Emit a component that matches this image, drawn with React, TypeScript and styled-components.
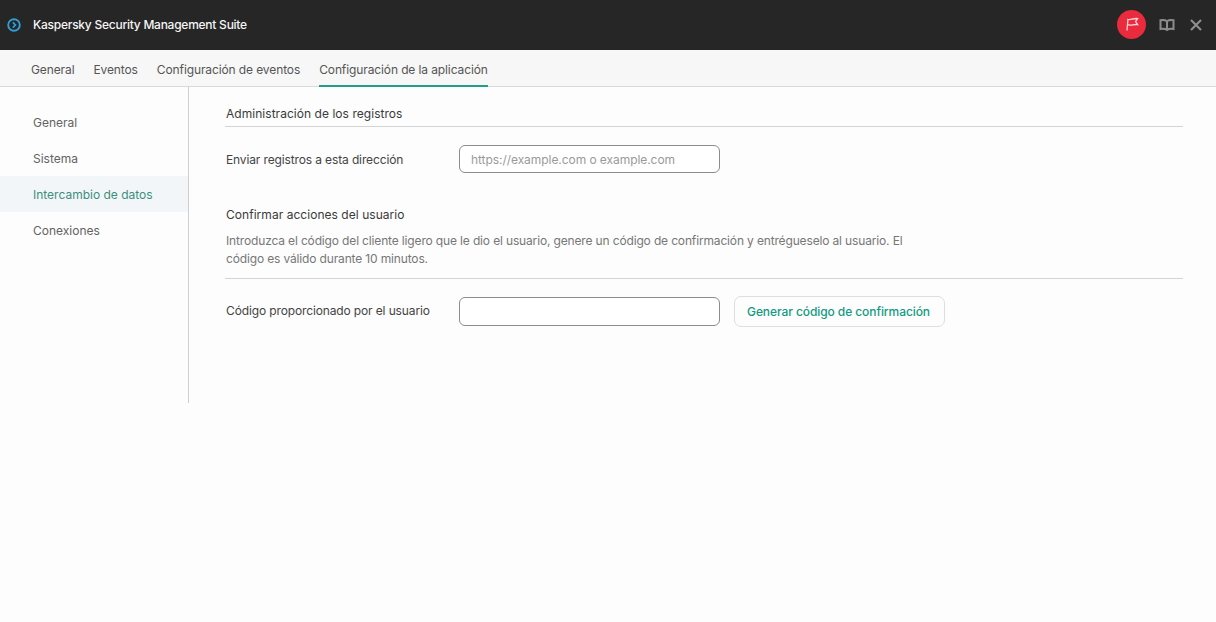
import React from "react";
import styled, { createGlobalStyle } from "styled-components";

const Global = createGlobalStyle`
  html, body { margin: 0; padding: 0; background: #fdfdfd; }
  body { font-family: Inter, "Liberation Sans", sans-serif; font-size: 12px; color: #2c2c2c; }
  * { box-sizing: border-box; }
`;

const Page = styled.div`
  width: 1216px;
  height: 622px;
  overflow: hidden;
  background: #fdfdfd;
`;

const Header = styled.header`
  height: 50px;
  background: #262626;
  display: flex;
  align-items: center;
  padding: 0 12px 1px 7px;
`;

const Title = styled.h1`
  margin: 0 0 1px 12px;
  font-size: 12px;
  font-weight: 500;
  letter-spacing: -0.25px;
  color: #f5f5f5;
  flex: 1;
`;

const Flag = styled.div`
  width: 29px;
  height: 29px;
  border-radius: 50%;
  background: #ea2a3d;
  display: flex;
  align-items: center;
  justify-content: center;
`;

const HeaderIcon = styled.div`
  margin-left: 13px;
  width: 16px;
  height: 16px;
  display: flex;
`;

const Tabs = styled.nav`
  height: 37px;
  background: #f7f7f7;
  border-bottom: 1px solid #d9d9d9;
  display: flex;
  gap: 19px;
  padding-left: 31px;
`;

const Tab = styled.div<{ $active?: boolean }>`
  height: 37px;
  line-height: 39px;
  letter-spacing: -0.11px;
  color: #555;
  border-bottom: 2px solid ${(p) => (p.$active ? "#1f9f85" : "transparent")};
`;

const Body = styled.div`
  display: flex;
  height: 316px;
`;

const Side = styled.aside`
  width: 189px;
  border-right: 1px solid #cfcfcf;
  padding-top: 17px;
`;

const SideItem = styled.div<{ $active?: boolean }>`
  height: 36px;
  line-height: 37px;
  padding-left: 33px;
  color: ${(p) => (p.$active ? "#3d8f7d" : "#636363")};
  background: ${(p) => (p.$active ? "#f2f6f8" : "transparent")};
`;

const Main = styled.main`
  flex: 1;
  padding: 19px 33px 0 36px;
`;

const SectionTitle = styled.div`
  line-height: 16px;
  padding-left: 1px;
  letter-spacing: 0.04px;
  color: #3a3a3a;
`;

const Divider = styled.div`
  height: 1px;
  background: #d4d4d4;
`;

const Row = styled.div`
  display: flex;
  align-items: center;
`;

const Label = styled.label`
  width: 234px;
  padding-left: 1px;
  letter-spacing: -0.13px;
  color: #444;
`;

const Input = styled.input`
  width: 261px;
  border: 1px solid #8c8c8c;
  border-radius: 6px;
  background: #fff;
  padding: 0 11px;
  font: inherit;
  letter-spacing: -0.06px;
  outline: none;
  &::placeholder { color: #9a9a9a; opacity: 1; }
`;

const Help = styled.p`
  margin: 0;
  width: 690px;
  padding-left: 1px;
  line-height: 18px;
  letter-spacing: -0.15px;
  color: #777;
`;

const Button = styled.button`
  height: 31px;
  width: 211px;
  margin-left: 14px;
  padding: 0 2px 0 0;
  border: 1px solid #dedede;
  border-radius: 7px;
  background: #fdfdfd;
  color: #139a82;
  font: inherit;
  font-weight: 500;
  letter-spacing: -0.08px;
`;

const LogRow = styled(Row)`
  margin-top: 18px;
  ${Input} { height: 28px; }
`;

const ConfirmTitle = styled(SectionTitle)`
  margin-top: 34px;
`;

const HelpWrap = styled.div`
  margin-top: 9px;
  margin-bottom: 10px;
`;

const CodeRow = styled(Row)`
  margin-top: 17px;
  ${Input} { height: 29px; }
  ${Label} { margin-bottom: 2px; }
`;

const TitleRule = styled(Divider)`
  margin-top: 4px;
`;

export default function App() {
  return (
    <Page>
      <Global />
      <Header>
        <svg width="14" height="14" viewBox="0 0 14 14" fill="none">
          <circle cx="7" cy="7" r="5.8" stroke="#2f9fd6" strokeWidth="1.9" />
          <path d="M5.8 4.4 8.4 7 5.8 9.6" stroke="#2f9fd6" strokeWidth="1.7" />
        </svg>
        <Title>Kaspersky Security Management Suite</Title>
        <Flag>
          <svg width="15" height="15" viewBox="0 0 15 15" fill="none" stroke="#ffd5da" strokeWidth="1.3">
            <path d="M3 13.5 3.9 2.5C6.5 3.5 9 1 13.6 1.6L11.6 4.6 13.6 7.6C9.5 7 7 9 3.5 7.6" />
          </svg>
        </Flag>
        <HeaderIcon>
          <svg width="16" height="16" viewBox="0 0 16 16" fill="none" stroke="#8c8c8c" strokeWidth="2">
            <path d="M8 4.2C6.5 3 4 2.8 1.5 3.2V12C4 11.6 6.5 11.8 8 13C9.5 11.8 12 11.6 14.5 12V3.2C12 2.8 9.5 3 8 4.2ZM8 4.2V13" />
          </svg>
        </HeaderIcon>
        <HeaderIcon>
          <svg width="16" height="16" viewBox="0 0 16 16" fill="none" stroke="#8f8f8f" strokeWidth="2.1">
            <path d="M3 3 13 13M13 3 3 13" />
          </svg>
        </HeaderIcon>
      </Header>
      <Tabs>
        <Tab>General</Tab>
        <Tab>Eventos</Tab>
        <Tab>Configuración de eventos</Tab>
        <Tab $active>Configuración de la aplicación</Tab>
      </Tabs>
      <Body>
        <Side>
          <SideItem>General</SideItem>
          <SideItem>Sistema</SideItem>
          <SideItem $active>Intercambio de datos</SideItem>
          <SideItem>Conexiones</SideItem>
        </Side>
        <Main>
          <SectionTitle>Administración de los registros</SectionTitle>
          <TitleRule />
          <LogRow>
            <Label>Enviar registros a esta dirección</Label>
            <Input placeholder="https://example.com o example.com" />
          </LogRow>
          <ConfirmTitle>Confirmar acciones del usuario</ConfirmTitle>
          <HelpWrap>
            <Help>
              Introduzca el código del cliente ligero que le dio el usuario, genere un código de confirmación y entrégueselo al usuario. El código es válido durante 10 minutos.
            </Help>
          </HelpWrap>
          <Divider />
          <CodeRow>
            <Label>Código proporcionado por el usuario</Label>
            <Input />
            <Button>Generar código de confirmación</Button>
          </CodeRow>
        </Main>
      </Body>
    </Page>
  );
}
